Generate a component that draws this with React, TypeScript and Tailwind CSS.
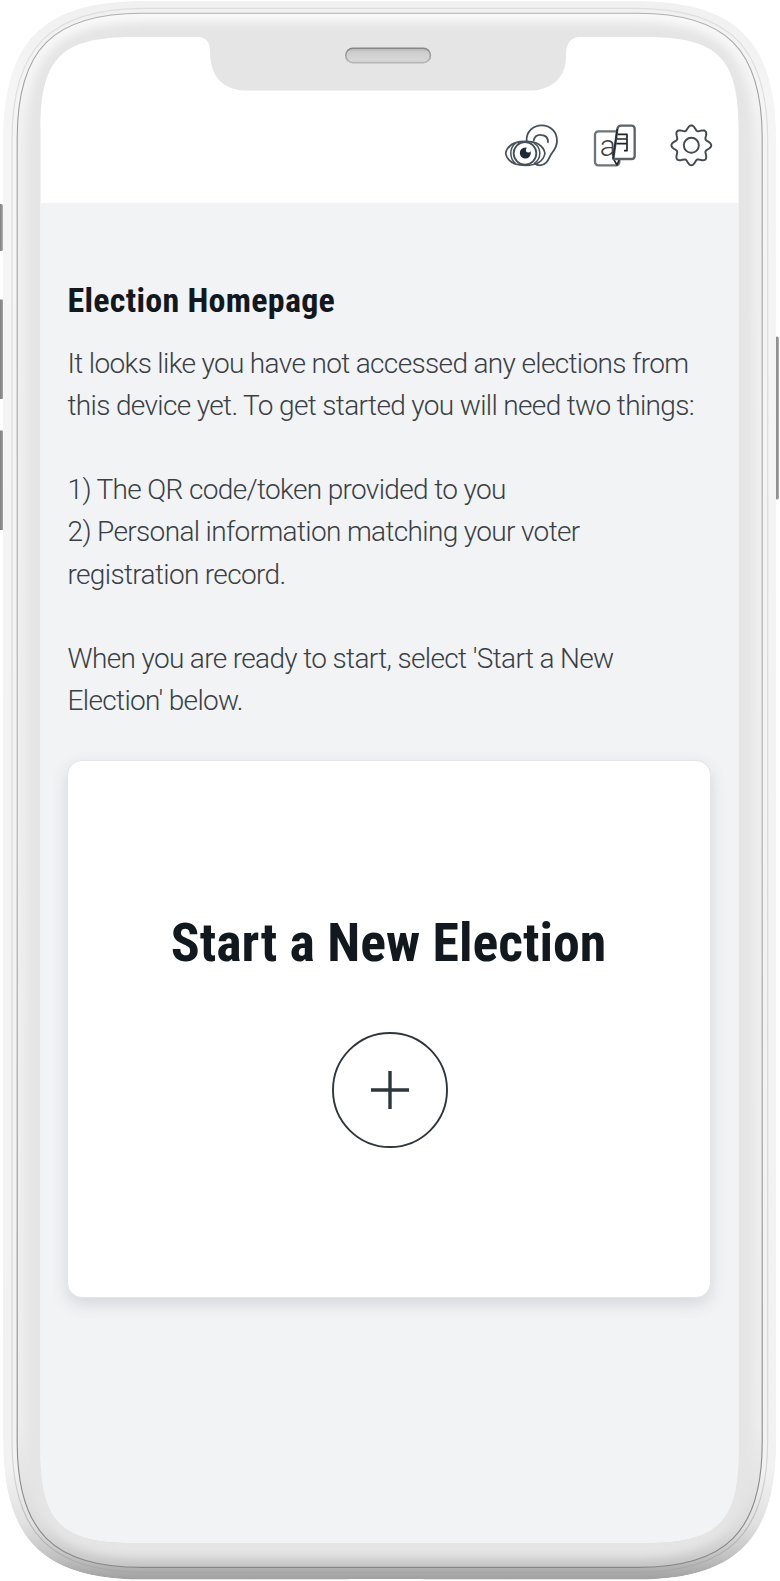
const GEAR_PATH =
  Array.from({ length: 161 }, (_, i) => {
    const a = (i / 160) * Math.PI * 2;
    const r = 53 + 6.8 * Math.cos(8 * a);
    return `${i ? "L" : "M"}${(70 + r * Math.cos(a)).toFixed(2)} ${(106 + r * Math.sin(a)).toFixed(2)}`;
  }).join("") + "Z";

/** Rounded rectangle with continuous corners: `l` is the corner's length, `a` its tightness. */
function squircle(x0: number, y0: number, x1: number, y1: number, l: number, a: number) {
  return [
    `M${x0} ${y0 + l}`,
    `C${x0} ${y0 + a} ${x0 + a} ${y0} ${x0 + l} ${y0}`,
    `H${x1 - l}`,
    `C${x1 - a} ${y0} ${x1} ${y0 + a} ${x1} ${y0 + l}`,
    `V${y1 - l}`,
    `C${x1} ${y1 - a} ${x1 - a} ${y1} ${x1 - l} ${y1}`,
    `H${x0 + l}`,
    `C${x0 + a} ${y1} ${x0} ${y1 - a} ${x0} ${y1 - l}Z`,
  ].join("");
}

const OUTER = squircle(3, 1, 776.3, 1579.6, 140, 40);
const RIM = squircle(12, 8.3, 767.7, 1572.3, 132, 39);
const INNER = squircle(17.2, 13.3, 762.2, 1567.4, 125, 36);
const SCREEN = squircle(40.4, 37, 738.7, 1543, 92, 21);

function PhoneFrame() {
  return (
    <svg className="pointer-events-none absolute inset-0" width="780" height="1581" viewBox="0 0 780 1581" fill="none" aria-hidden="true">
      <defs>
        <linearGradient id="shell" gradientUnits="userSpaceOnUse" x1="0" y1="0" x2="0" y2="1580">
          <stop offset="0" stopColor="#f0f0f0" />
          <stop offset="0.06" stopColor="#f5f5f5" />
          <stop offset="0.5" stopColor="#f3f3f3" />
          <stop offset="0.93" stopColor="#f2f2f2" />
          <stop offset="0.965" stopColor="#e0e0e0" />
          <stop offset="0.985" stopColor="#c2c2c2" />
          <stop offset="1" stopColor="#a0a0a0" />
        </linearGradient>
        <linearGradient id="edge" gradientUnits="userSpaceOnUse" x1="0" y1="0" x2="0" y2="1580">
          <stop offset="0" stopColor="#fafafa" />
          <stop offset="0.1" stopColor="#f0f0f0" />
          <stop offset="0.9" stopColor="#eeeeee" />
          <stop offset="0.965" stopColor="#dcdcdc" />
          <stop offset="1" stopColor="#bcbcbc" />
        </linearGradient>
        <linearGradient id="rimLine" gradientUnits="userSpaceOnUse" x1="0" y1="0" x2="0" y2="1580">
          <stop offset="0" stopColor="#dedede" />
          <stop offset="0.93" stopColor="#d6d6d6" />
          <stop offset="1" stopColor="#a2a2a2" />
        </linearGradient>
        <linearGradient id="innerLine" gradientUnits="userSpaceOnUse" x1="0" y1="0" x2="0" y2="1580">
          <stop offset="0" stopColor="#b2b2b2" />
          <stop offset="0.06" stopColor="#a0a0a0" />
          <stop offset="0.5" stopColor="#b0b0b0" />
          <stop offset="1" stopColor="#858585" />
        </linearGradient>
        <linearGradient id="keys" x1="0" y1="0" x2="1" y2="0">
          <stop offset="0" stopColor="#777777" />
          <stop offset="0.5" stopColor="#8c8c8c" />
          <stop offset="1" stopColor="#b4b4b4" />
        </linearGradient>
        <linearGradient id="slot" x1="0" y1="0" x2="0" y2="1">
          <stop offset="0" stopColor="#b4b4b4" />
          <stop offset="0.3" stopColor="#cecece" />
          <stop offset="1" stopColor="#dadada" />
        </linearGradient>
        <linearGradient id="slotEdge" x1="0" y1="0" x2="0" y2="1">
          <stop offset="0" stopColor="#868686" />
          <stop offset="1" stopColor="#b6b6b6" />
        </linearGradient>
        <filter id="soft" filterUnits="userSpaceOnUse" x="0" y="0" width="780" height="1581">
          <feGaussianBlur stdDeviation="5" />
        </filter>
        <clipPath id="bezel">
          <path d={INNER + SCREEN} clipRule="evenodd" />
        </clipPath>
        <clipPath id="shellOnly">
          <path d={OUTER + SCREEN} clipRule="evenodd" />
        </clipPath>
      </defs>

      <path d={`M0 0H780V1581H0Z${SCREEN}`} fill="#ffffff" fillRule="evenodd" />
      <g fill="url(#keys)">
        <rect x="-1" y="204" width="4" height="47" rx="1.5" />
        <rect x="-1" y="299.5" width="4.8" height="99.5" rx="1.5" />
        <rect x="-1" y="430.5" width="4.8" height="99.5" rx="1.5" />
        <rect x="775.3" y="336.5" width="3.7" height="163" rx="1.8" />
      </g>
      <g clipPath="url(#shellOnly)">
        <path d={OUTER} fill="url(#shell)" />
        <path d={RIM} stroke="url(#rimLine)" strokeWidth="1.2" />
      </g>
      <g clipPath="url(#bezel)">
        <path d={INNER} fill="#e5e5e5" />
        <path d={INNER} stroke="url(#edge)" strokeWidth="18" filter="url(#soft)" />
      </g>
      <path d={INNER} stroke="url(#innerLine)" strokeWidth="1.1" />

      <path
        d="M196 36.5C206 37 210 42 210 51C210 76 222 90.6 248 90.6H529C553 90.6 566 76 566 57C566 43 570 37 582 36.5Z"
        fill="#e5e5e5"
      />
      <rect x="345.8" y="48.2" width="84.6" height="14.4" rx="7.2" fill="url(#slot)" stroke="url(#slotEdge)" strokeWidth="1.6" />
      <path d="M345 1581L350 1579H422L427 1581Z" fill="#ffffff" />
    </svg>
  );
}

function SightHearingIcon() {
  return (
    <svg width="60" height="70" viewBox="36 0 180 210" fill="none" stroke="#46515a" strokeWidth="5.5" strokeLinecap="round" strokeLinejoin="round" aria-hidden="true">
      <path d="M110 92C108 65 130 46 155 46C183 46 201 67 201 92C201 116 187 124 180 139C173 154 166 166 150 166C144 166 139 165 135 161" />
      <path d="M131 92C134 78 145 74 154 75C166 76 174 84 174 96" />
      <path d="M47 130C52 106 72 94 106 94C140 94 160 106 165 130C160 154 140 166 106 166C72 166 52 154 47 130Z" fill="#ffffff" strokeWidth="5" />
      <path d="M76 100C58 114 58 146 76 160M133 100C155 114 155 146 133 160" strokeWidth="4.5" />
      <circle cx="105" cy="130" r="34" fill="#ffffff" />
      <circle cx="106" cy="129" r="16.5" fill="#1d2a33" stroke="none" />
      <circle cx="115" cy="120" r="7.5" fill="#ffffff" stroke="none" />
    </svg>
  );
}

function LanguageIcon() {
  return (
    <svg width="50" height="70" viewBox="300 0 150 210" fill="none" stroke="#3c444a" strokeWidth="5" strokeLinejoin="round" aria-hidden="true">
      <rect x="315" y="64" width="73" height="102" rx="10" stroke="#6d747a" strokeWidth="7" />
      <text x="329" y="139" fontFamily="Roboto, sans-serif" fontSize="90" fontWeight="300" fill="#3c444a" stroke="none">a</text>
      <path d="M370 146L381 165L388 148" stroke="#20282d" />
      <path d="M394 47H424Q434 47 434 57V137Q434 147 424 147H370L382 57Q384 47 394 47Z" fill="#ffffff" stroke="#5b6369" strokeWidth="7" />
      <path d="M383 73H411V122H402M381 87H411M379 101H411" stroke="#1e262b" strokeWidth="5" />
      <path d="M382 57L369 146" stroke="#20282d" strokeWidth="5" />
    </svg>
  );
}

function SettingsIcon() {
  return (
    <svg width="48" height="70" viewBox="0 0 144 210" fill="none" stroke="#434b50" strokeWidth="5.8" strokeLinejoin="round" aria-hidden="true">
      <path d={GEAR_PATH} />
      <circle cx="70" cy="106" r="22.5" />
    </svg>
  );
}

export default function App() {
  return (
    <div className="relative h-[1581px] w-[780px] overflow-hidden bg-white pt-[37px] pr-[41.5px] pl-[40.5px] font-['Roboto',sans-serif]">
      <div className="flex h-[1507px] flex-col bg-[#f2f3f5]">
        <header className="flex h-[166px] shrink-0 items-start justify-end gap-7 bg-white pt-[73px] pr-[23px]">
          <SightHearingIcon />
          <LanguageIcon />
          <SettingsIcon />
        </header>

        <main className="flex flex-col px-[27px] pt-[77px]">
          <h1 className="font-['Roboto_Condensed','Roboto',sans-serif] text-[34px] leading-10 font-bold tracking-[0.26px] text-[#11191e]">
            Election Homepage
          </h1>
          <div className="mt-[22.5px] flex flex-col gap-[42.2px] text-[28px] leading-[42.2px] font-light tracking-[-0.65px] whitespace-nowrap text-[#384045]">
            <p>
              It looks like you have not accessed any elections from
              <br />
              this device yet. To get started you will need two things:
            </p>
            <p>
              1) The QR code/token provided to you
              <br />
              2) Personal information matching your voter
              <br />
              registration record.
            </p>
            <p>
              When you are ready to start, select 'Start a New
              <br />
              Election' below.
            </p>
          </div>

          <button
            type="button"
            className="mt-[37.5px] flex h-[538px] w-[644px] -translate-x-px flex-col items-center rounded-[15px] border border-[#e3e6e9] bg-white pt-[150.5px] shadow-[0_6px_16px_rgba(70,90,105,0.18)]"
          >
            <span className="font-['Roboto_Condensed','Roboto',sans-serif] text-[53.8px] leading-[64px] font-bold whitespace-nowrap text-[#11191e]">
              Start a New Election
            </span>
            <svg className="mt-14 ml-[3px]" width="118" height="118" viewBox="0 0 118 118" fill="none" stroke="#2f363b" aria-hidden="true">
              <circle cx="59" cy="59" r="57" strokeWidth="1.9" />
              <path d="M59 40V78M40 59H78" strokeWidth="3.4" />
            </svg>
          </button>
        </main>
      </div>
      <PhoneFrame />
    </div>
  );
}
